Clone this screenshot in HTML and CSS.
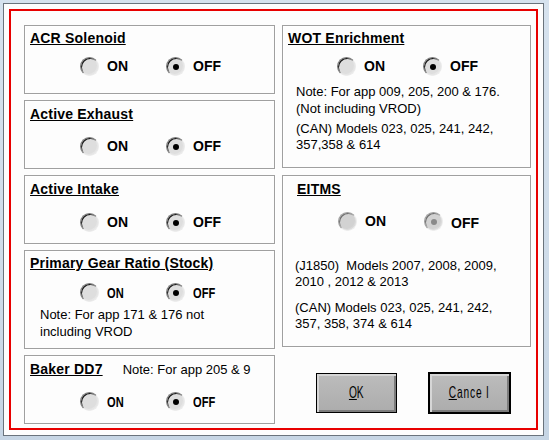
FILE: index.html
```html
<!DOCTYPE html>
<html>
<head>
<meta charset="utf-8">
<link rel="stylesheet" href="styles.css">
</head>
<body>
<div class="frame">
  <div class="dialog">
    <div class="col col-left">
      <section class="group g-acr">
        <div class="title">ACR Solenoid</div>
        <div class="radios">
          <label class="opt"><span class="radio"></span><span class="lbl">ON</span></label>
          <label class="opt"><span class="radio checked"></span><span class="lbl">OFF</span></label>
        </div>
      </section>
      <section class="group g-exh">
        <div class="title">Active Exhaust</div>
        <div class="radios">
          <label class="opt"><span class="radio"></span><span class="lbl">ON</span></label>
          <label class="opt"><span class="radio checked"></span><span class="lbl">OFF</span></label>
        </div>
      </section>
      <section class="group g-int">
        <div class="title">Active Intake</div>
        <div class="radios">
          <label class="opt"><span class="radio"></span><span class="lbl">ON</span></label>
          <label class="opt"><span class="radio checked"></span><span class="lbl">OFF</span></label>
        </div>
      </section>
      <section class="group g-pgr">
        <div class="title">Primary Gear Ratio (Stock)</div>
        <div class="radios">
          <label class="opt"><span class="radio"></span><span class="lbl narrow">ON</span></label>
          <label class="opt"><span class="radio checked"></span><span class="lbl narrow">OFF</span></label>
        </div>
        <p class="note note-pgr">Note: For app 171 &amp; 176 not<br>including VROD</p>
      </section>
      <section class="group g-baker">
        <div class="title-row">
          <div class="title">Baker DD7</div>
          <span class="inline-note">Note: For app 205 &amp; 9</span>
        </div>
        <div class="radios">
          <label class="opt"><span class="radio"></span><span class="lbl narrow">ON</span></label>
          <label class="opt"><span class="radio checked"></span><span class="lbl narrow">OFF</span></label>
        </div>
      </section>
    </div>
    <div class="col col-right">
      <section class="group g-wot">
        <div class="title">WOT Enrichment</div>
        <div class="radios">
          <label class="opt"><span class="radio"></span><span class="lbl">ON</span></label>
          <label class="opt"><span class="radio checked"></span><span class="lbl">OFF</span></label>
        </div>
        <p class="note note-wot1">Note: For app 009, 205, 200 &amp; 176.<br>(Not including VROD)</p>
        <p class="note note-wot2">(CAN) Models 023, 025, 241, 242,<br>357,358 &amp; 614</p>
      </section>
      <section class="group g-eitms">
        <div class="title">EITMS</div>
        <div class="radios">
          <label class="opt"><span class="radio disabled"></span><span class="lbl">ON</span></label>
          <label class="opt"><span class="radio disabled checked"></span><span class="lbl lbl-low">OFF</span></label>
        </div>
        <p class="note note-e1">(J1850)&nbsp; Models 2007, 2008, 2009,<br>2010 , 2012 &amp; 2013</p>
        <p class="note note-e2">(CAN) Models 023, 025, 241, 242,<br>357, 358, 374 &amp; 614</p>
      </section>
      <div class="buttons">
        <button class="btn btn-ok"><span class="btxt"><u>O</u>K</span></button>
        <button class="btn btn-cancel"><span class="btxt btxt-cancel"><u>C</u>ance l</span></button>
      </div>
    </div>
  </div>
</div>
</body>
</html>
```

FILE: styles.css
```css
html, body {
  margin: 0;
  padding: 0;
}
body {
  width: 549px;
  height: 440px;
  overflow: hidden;
  background: linear-gradient(to bottom, #d6e2ee, #cfdce9 60%, #c6d5e4);
  font-family: "Liberation Sans", Arial, sans-serif;
  color: #000;
}
.frame {
  box-sizing: border-box;
  margin: 3px 0 0 3px;
  width: 541px;
  height: 433px;
  border: 1px solid #6a737c;
  background: #fdfdfd;
  padding: 5px;
}
.dialog {
  box-sizing: border-box;
  width: 529px;
  height: 421px;
  border: 2px solid #e80000;
  padding: 14px 0 0 13px;
  display: flex;
  gap: 7px;
}
.col {
  display: flex;
  flex-direction: column;
}
.col-left {
  width: 251px;
  gap: 6px;
}
.col-right {
  width: 249px;
  gap: 7px;
}
.group {
  box-sizing: border-box;
  border: 1px solid #a0a0a0;
  box-shadow: inset 1px 1px 0 #ffffff, 1px 1px 0 #ffffff;
  padding: 4px 0 0 5px;
  height: 69px;
}
.title {
  font-size: 14px;
  font-weight: bold;
  line-height: 17px;
  text-decoration: underline;
  letter-spacing: 0.2px;
}
.title-row {
  display: flex;
  align-items: baseline;
}
.inline-note {
  font-size: 13px;
  line-height: 17px;
  margin-left: 20px;
}
.radios {
  display: flex;
  padding-left: 50px;
  margin-top: 10px;
  height: 19px;
}
.opt {
  display: flex;
  align-items: center;
  width: 86px;
  height: 19px;
}
.radio {
  box-sizing: border-box;
  width: 19px;
  height: 19px;
  flex: none;
  border-radius: 50%;
  border: 1px solid;
  border-color: #7a7a7a #ececec #ececec #7a7a7a;
  background: #dedede;
  box-shadow: inset 1px 1px 0 #1e1e1e, inset -1px -1px 0 #e6e6e6;
  display: flex;
  align-items: center;
  justify-content: center;
}
.radio.checked::after {
  content: "";
  width: 6px;
  height: 6px;
  border-radius: 50%;
  background: #000;
}
.radio.disabled {
  background: #d2d2d2;
  border-color: #a0a0a0 #ededed #ededed #a0a0a0;
  box-shadow: inset 1px 1px 0 #707070, inset -1px -1px 0 #dadada;
}
.radio.disabled.checked::after {
  background: #8a8a8a;
}
.lbl {
  margin-left: 8px;
  font-size: 14px;
  font-weight: bold;
  line-height: 17px;
}
.lbl-low {
  position: relative;
  top: 2px;
}
.narrow {
  display: inline-block;
  transform: scaleX(0.74);
  transform-origin: left center;
  font-size: 15px;
}
.note {
  margin: 0;
  font-size: 13px;
  line-height: 16px;
}

/* per-group tuning */
.g-acr .radios { margin-top: 10px; }
.g-exh { padding-top: 5px; }
.g-exh .radios { margin-top: 14px; }
.g-int { padding-top: 5px; }
.g-int .radios { margin-top: 15px; }
.g-pgr { height: 99px; }
.g-pgr .radios { margin-top: 11px; }
.note-pgr { margin: 4px 0 0 10px; line-height: 17px; }
.g-baker { padding-top: 5px; }
.g-baker .radios { margin-top: 14px; }

.g-wot { height: 143px; }
.g-wot .radios { padding-left: 49px; margin-top: 10px; }
.note-wot1 { margin: 7px 0 0 8px; line-height: 17px; }
.note-wot2 { margin: 4px 0 0 8px; }

.g-eitms { height: 172px; padding: 5px 0 0 14px; }
.g-eitms .radios { padding-left: 41px; margin-top: 14px; }
.note-e1 { margin: 27px 0 0 -2px; }
.note-e2 { margin: 10px 0 0 -2px; }

.buttons {
  display: flex;
  align-items: center;
  gap: 32px;
  padding-left: 34px;
  margin-top: 19px;
}
.btn {
  box-sizing: border-box;
  width: 81px;
  height: 40px;
  margin: 0;
  padding: 0;
  border: 1px solid #000;
  background: linear-gradient(to bottom, #bcbcbc, #acacac);
  box-shadow: inset 2px 2px 0 #d6d6d6, inset -2px -2px 0 #7c7c7c;
  display: flex;
  align-items: center;
  justify-content: center;
  font-family: "Liberation Sans", Arial, sans-serif;
  color: #000;
}
.btn-cancel {
  outline: 1px solid #000;
}
.btxt {
  display: inline-block;
  font-size: 17px;
  transform: scaleX(0.6);
}
.btxt-cancel {
  letter-spacing: 1.5px;
  white-space: pre;
}
```
